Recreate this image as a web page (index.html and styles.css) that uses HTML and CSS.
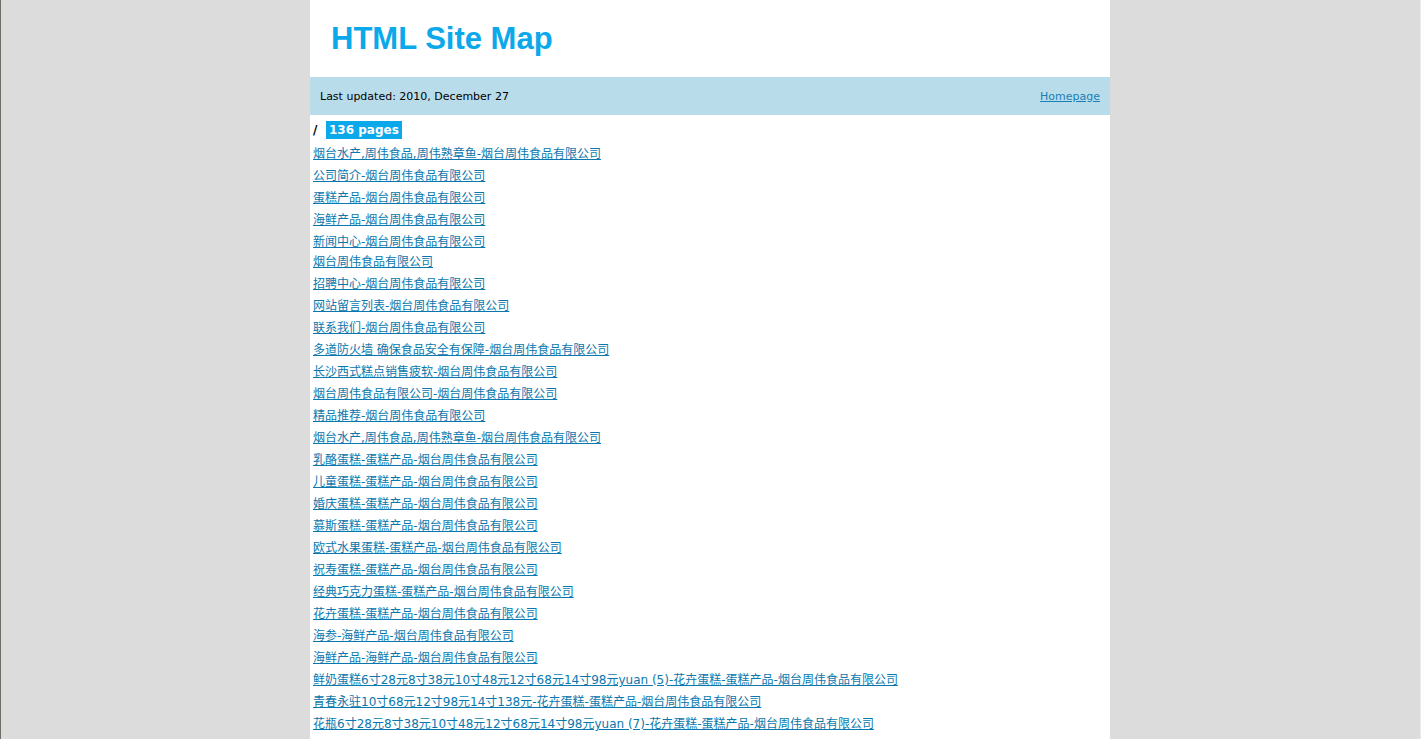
FILE: index.html
```html
<!DOCTYPE html>
<html lang="zh">
<head>
<meta charset="utf-8">
<title>HTML Site Map</title>
<link rel="stylesheet" href="styles.css">
</head>
<body>
<div class="page">
  <div class="header">
    <h1 class="title">HTML Site Map</h1>
  </div>
  <div class="infobar">
    <span class="updated">Last updated: 2010, December 27</span>
    <a class="home" href="#">Homepage</a>
  </div>
  <div class="content">
    <div class="dir"><span class="slash">/</span><span class="count">136 pages</span></div>
    <ul class="links">
      <li><a href="#">烟台水产,周伟食品,周伟熟章鱼-烟台周伟食品有限公司</a></li>
      <li><a href="#">公司简介-烟台周伟食品有限公司</a></li>
      <li><a href="#">蛋糕产品-烟台周伟食品有限公司</a></li>
      <li><a href="#">海鲜产品-烟台周伟食品有限公司</a></li>
      <li><a href="#">新闻中心-烟台周伟食品有限公司</a></li>
      <li class="short"><a href="#">烟台周伟食品有限公司</a></li>
      <li><a href="#">招聘中心-烟台周伟食品有限公司</a></li>
      <li><a href="#">网站留言列表-烟台周伟食品有限公司</a></li>
      <li><a href="#">联系我们-烟台周伟食品有限公司</a></li>
      <li><a href="#">多道防火墙 确保食品安全有保障-烟台周伟食品有限公司</a></li>
      <li><a href="#">长沙西式糕点销售疲软-烟台周伟食品有限公司</a></li>
      <li><a href="#">烟台周伟食品有限公司-烟台周伟食品有限公司</a></li>
      <li><a href="#">精品推荐-烟台周伟食品有限公司</a></li>
      <li><a href="#">烟台水产,周伟食品,周伟熟章鱼-烟台周伟食品有限公司</a></li>
      <li><a href="#">乳酪蛋糕-蛋糕产品-烟台周伟食品有限公司</a></li>
      <li><a href="#">儿童蛋糕-蛋糕产品-烟台周伟食品有限公司</a></li>
      <li><a href="#">婚庆蛋糕-蛋糕产品-烟台周伟食品有限公司</a></li>
      <li><a href="#">慕斯蛋糕-蛋糕产品-烟台周伟食品有限公司</a></li>
      <li><a href="#">欧式水果蛋糕-蛋糕产品-烟台周伟食品有限公司</a></li>
      <li><a href="#">祝寿蛋糕-蛋糕产品-烟台周伟食品有限公司</a></li>
      <li><a href="#">经典巧克力蛋糕-蛋糕产品-烟台周伟食品有限公司</a></li>
      <li><a href="#">花卉蛋糕-蛋糕产品-烟台周伟食品有限公司</a></li>
      <li><a href="#">海参-海鲜产品-烟台周伟食品有限公司</a></li>
      <li><a href="#">海鲜产品-海鲜产品-烟台周伟食品有限公司</a></li>
      <li><a href="#">鲜奶蛋糕6寸28元8寸38元10寸48元12寸68元14寸98元yuan (5)-花卉蛋糕-蛋糕产品-烟台周伟食品有限公司</a></li>
      <li><a href="#">青春永驻10寸68元12寸98元14寸138元-花卉蛋糕-蛋糕产品-烟台周伟食品有限公司</a></li>
      <li><a href="#">花瓶6寸28元8寸38元10寸48元12寸68元14寸98元yuan (7)-花卉蛋糕-蛋糕产品-烟台周伟食品有限公司</a></li>
    </ul>
  </div>
</div>
</body>
</html>
```

FILE: styles.css
```css
html {
  background: #dcdcdc;
}
body {
  margin: 0;
  border-left: 1px solid #6e6e66;
  border-right: 1px solid #ecece6;
  background: #dcdcdc;
  font-family: "DejaVu Sans", "Noto Sans CJK SC", sans-serif;
  font-size: 12px;
}
.page {
  width: 800px;
  margin: 0 0 0 309px;
  background: #ffffff;
  padding-bottom: 20px;
}
.header {
  height: 77px;
  padding-left: 21px;
  display: flex;
  align-items: center;
}
.title {
  margin: 0;
  font-family: "Liberation Sans", sans-serif;
  font-size: 31px;
  font-weight: bold;
  color: #0ba8ea;
}
.infobar {
  height: 38px;
  background: #b9dcea;
  display: flex;
  align-items: center;
  justify-content: space-between;
  padding: 0 10px;
}
.updated {
  color: #000;
  font-size: 11px;
}
.home {
  color: #1a7fb6;
  font-size: 11px;
}
.content {
  padding: 4px 0 0 3px;
}
.dir {
  height: 22px;
  margin-bottom: 2px;
  display: flex;
  align-items: center;
  font-weight: bold;
  font-size: 12px;
}
.slash {
  color: #000;
  width: 13px;
}
.count {
  background: #0ba8ea;
  color: #fff;
  padding: 1px 3px;
  line-height: 16px;
}
.links {
  list-style: none;
  margin: 0;
  padding: 0;
}
.links li {
  height: 22px;
  line-height: 22px;
}
.links li.short {
  height: 20px;
  line-height: 18px;
}
.links a {
  color: #0a78ae;
  font-size: 12px;
  text-decoration: underline;
  white-space: nowrap;
}
```
